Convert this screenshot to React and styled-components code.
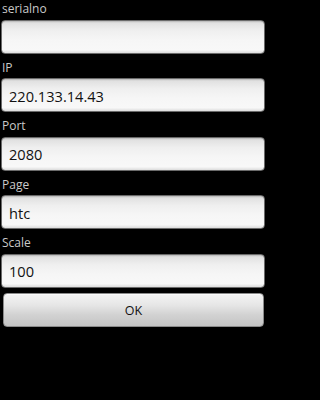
import React from "react";
import styled, { createGlobalStyle } from "styled-components";

const Global = createGlobalStyle`
  html, body { margin: 0; padding: 0; background: #000; }
  body { font-family: "Open Sans", "DejaVu Sans", sans-serif; }
  #root { min-height: 400px; background: #000; }
`;

const Form = styled.div`
  display: flex;
  flex-direction: column;
  width: 267px;
  min-height: 400px;
  box-sizing: border-box;
  padding: 0 2px 0 1px;
  background: #000;
`;

const Group = styled.div`
  display: flex;
  flex-direction: column;
  margin-bottom: 5px;
`;

const Label = styled.label`
  display: block;
  font-size: 12px;
  line-height: 15px;
  padding: 1px 0 3.5px 1px;
  color: #cacaca;
`;

const Input = styled.input`
  box-sizing: border-box;
  height: 34px;
  width: 100%;
  margin: 0;
  padding: 1px 7px 0;
  border: 1px solid #6a6a6a;
  border-radius: 4px;
  font-family: "Open Sans", "DejaVu Sans", sans-serif;
  font-size: 14.6px;
  color: #111;
  outline: none;
  background: linear-gradient(
    to bottom,
    #cfcfcf 0%,
    #e2e2e2 8%,
    #efefef 30%,
    #f6f6f6 60%,
    #f8f8f8 90%,
    #dcdcdc 100%
  );
  box-shadow: inset 0 1px 1px rgba(0, 0, 0, 0.1);
`;

const Button = styled.button`
  box-sizing: border-box;
  height: 34px;
  margin: 0.5px 1px 0 2px;
  border: 1px solid #8a8a8a;
  border-radius: 4px;
  font-family: "Open Sans", "DejaVu Sans", sans-serif;
  font-size: 12.5px;
  color: #111;
  background: linear-gradient(to bottom, #f4f4f4 0%, #e6e6e6 35%, #d2d2d2 65%, #c4c4c4 100%);
  box-shadow: inset 0 1px 0 #fafafa;
  padding: 0;
`;

const fields = [
  { label: "serialno", value: "" },
  { label: "IP", value: "220.133.14.43" },
  { label: "Port", value: "2080" },
  { label: "Page", value: "htc" },
  { label: "Scale", value: "100" },
];

export default function App() {
  return (
    <>
      <Global />
      <Form>
        {fields.map((f) => (
          <Group key={f.label}>
            <Label>{f.label}</Label>
            <Input defaultValue={f.value} />
          </Group>
        ))}
        <Button>OK</Button>
      </Form>
    </>
  );
}
